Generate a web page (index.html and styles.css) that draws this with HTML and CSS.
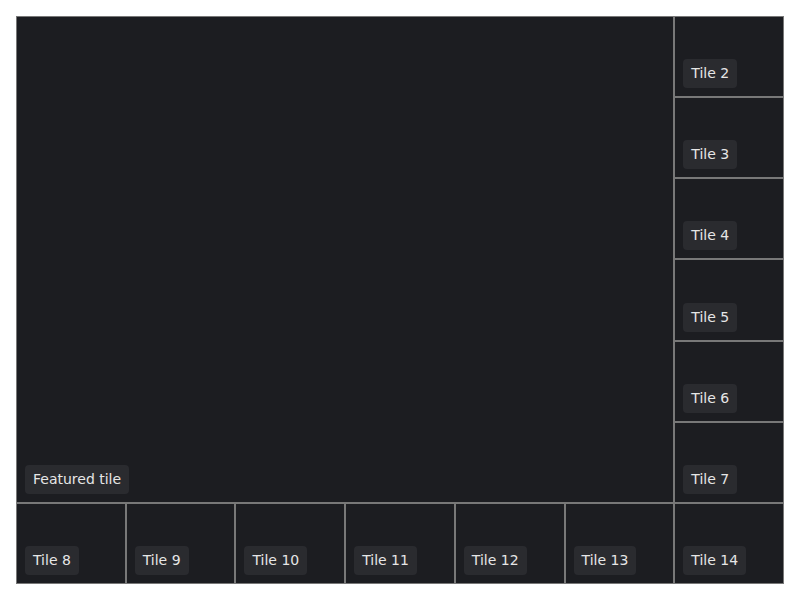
FILE: index.html
```html
<!DOCTYPE html>
<html>
<head>
<meta charset="utf-8">
<link rel="stylesheet" href="styles.css">
</head>
<body>
<div class="grid">
  <div class="tile featured"><span class="label">Featured tile</span></div>
  <div class="tile"><span class="label">Tile 2</span></div>
  <div class="tile"><span class="label">Tile 3</span></div>
  <div class="tile"><span class="label">Tile 4</span></div>
  <div class="tile"><span class="label">Tile 5</span></div>
  <div class="tile"><span class="label">Tile 6</span></div>
  <div class="tile"><span class="label">Tile 7</span></div>
  <div class="tile"><span class="label">Tile 8</span></div>
  <div class="tile"><span class="label">Tile 9</span></div>
  <div class="tile"><span class="label">Tile 10</span></div>
  <div class="tile"><span class="label">Tile 11</span></div>
  <div class="tile"><span class="label">Tile 12</span></div>
  <div class="tile"><span class="label">Tile 13</span></div>
  <div class="tile"><span class="label">Tile 14</span></div>
</div>
</body>
</html>
```
FILE: styles.css
```css
html, body {
  margin: 0;
  padding: 0;
  background: #ffffff;
}
body {
  padding: 16px;
  font-family: "DejaVu Sans", sans-serif;
}
.grid {
  width: 768px;
  height: 568px;
  display: grid;
  grid-template-columns: repeat(7, 1fr);
  grid-template-rows: repeat(7, 1fr);
  grid-template-areas:
    "f f f f f f t2"
    "f f f f f f t3"
    "f f f f f f t4"
    "f f f f f f t5"
    "f f f f f f t6"
    "f f f f f f t7"
    "t8 t9 t10 t11 t12 t13 t14";
}
.tile {
  box-sizing: border-box;
  border: 1px solid #787878;
  background: #1c1d21;
  display: flex;
  flex-direction: column;
  justify-content: flex-end;
  align-items: flex-start;
  padding: 8px;
  min-width: 0;
  min-height: 0;
}
.featured {
  grid-area: f;
}
.label {
  display: block;
  background: #2a2b2f;
  color: #e6e6e6;
  font-size: 14px;
  line-height: 17px;
  padding: 6px 8px;
  border-radius: 4px;
  white-space: nowrap;
}
```
